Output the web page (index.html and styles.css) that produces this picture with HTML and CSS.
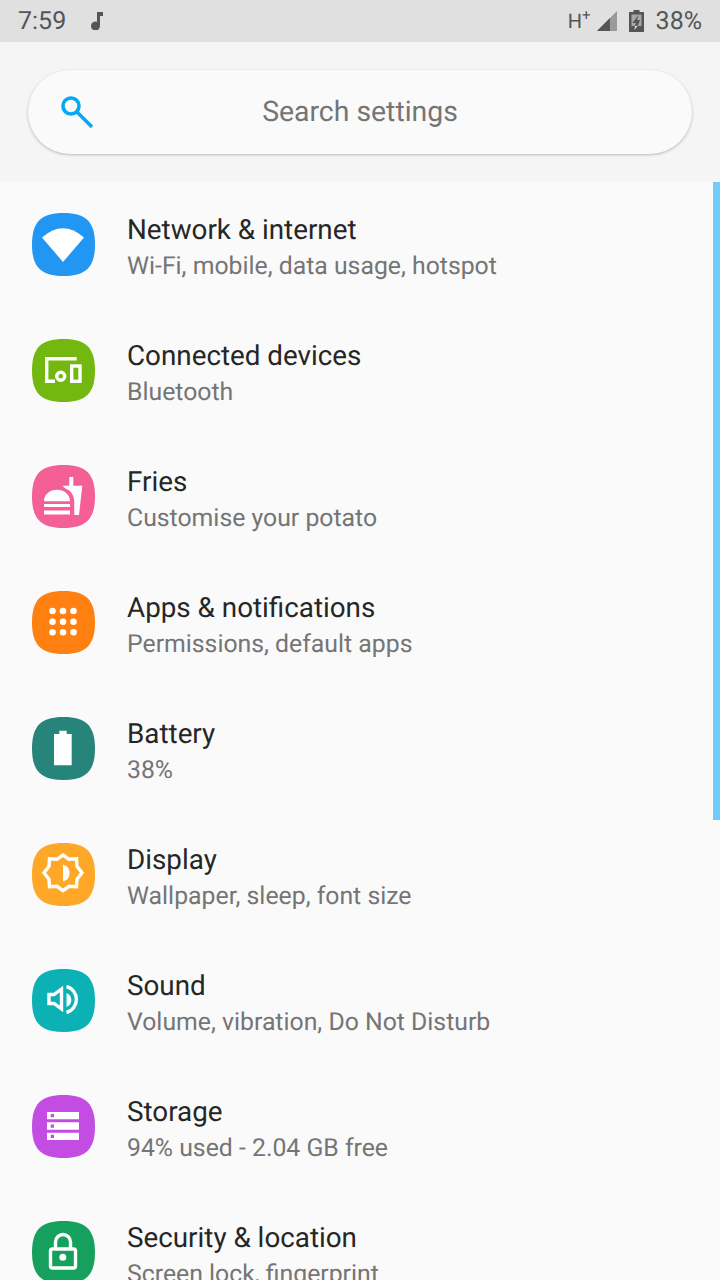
FILE: index.html
```html
<!DOCTYPE html>
<html lang="en">
<head>
    <meta charset="UTF-8">
    <meta name="viewport" content="width=device-width, initial-scale=1.0">
    <title>Settings</title>
    <link rel="stylesheet" href="styles.css">
</head>
<body>
    <div class="phone">
        <div class="status-bar">
            <div class="status-left">
                <span class="clock">7:59</span>
                <svg class="note" width="12" height="18" viewBox="0 0 12 18"><path d="M6 0h6v4H9v10a4.500 4.500 0 1 1-3-4.200z" fill="#555"/></svg>
            </div>
            <div class="status-right">
                <span class="network">H<sup>+</sup></span>
                <svg class="signal" width="20" height="20" viewBox="0 0 20 20"><path d="M20 0v20H0z" fill="#9a9a9a"/><path d="M13 7v13H0z" fill="#555"/></svg>
                <svg class="charging" width="15" height="22" viewBox="0 0 15 22"><path fill="#a6a6a6" d="M2 4h11v12H2z"/><path fill="#555" fill-rule="evenodd" d="M4.500 0h6v2H15v20H0V2h4.500zM2.500 4.500v15h10v-15z"/><path fill="#555" d="M2 16h11v4H2z"/><path fill="#555" d="M9.500 5L3.500 13H7l-1 3h2.500L11 10H8z"/><path fill="#e0e0e0" d="M6 16h2.500L5.500 20z"/></svg>
                <span class="percent">38%</span>
            </div>
        </div>

        <div class="search-area">
            <div class="search-bar">
                <svg class="search-icon" width="34" height="34" viewBox="0 0 34 34"><circle cx="10" cy="10" r="8" fill="none" stroke="#03a9f4" stroke-width="3.600"/><path d="M16 16l15 15" stroke="#03a9f4" stroke-width="3.600"/></svg>
                <span class="search-text">Search settings</span>
            </div>
        </div>

        <div class="list">
            <div class="scroll-thumb"></div>

            <div class="row">
                <svg class="icon" viewBox="0 0 63 63"><path class="tile blue" d="M31.500 0C54 0 63 9 63 31.500S54 63 31.500 63 0 54 0 31.500 9 0 31.500 0z"/><path class="glyph" d="M10 24.500Q31 6 52 24.500L31 49z"/></svg>
                <div class="row-text">
                    <div class="row-title">Network &amp; internet</div>
                    <div class="row-sub">Wi-Fi, mobile, data usage, hotspot</div>
                </div>
            </div>

            <div class="row">
                <svg class="icon" viewBox="0 0 63 63"><path class="tile green" d="M31.500 0C54 0 63 9 63 31.500S54 63 31.500 63 0 54 0 31.500 9 0 31.500 0z"/><path class="line" d="M44.700 19.700H14.700v22.600H23"/><rect class="line" x="39.700" y="27" width="8.300" height="15.300"/><circle class="line" cx="28.700" cy="37.300" r="4"/></svg>
                <div class="row-text">
                    <div class="row-title">Connected devices</div>
                    <div class="row-sub">Bluetooth</div>
                </div>
            </div>

            <div class="row">
                <svg class="icon" viewBox="0 0 63 63"><path class="tile pink" d="M31.500 0C54 0 63 9 63 31.500S54 63 31.500 63 0 54 0 31.500 9 0 31.500 0z"/><path class="glyph" d="M12 36.300c0-7 6-11.600 13-11.600s13 4.600 13 11.600zM12 39h26v3H12zM12 45.500h26V49.500H12zM37.300 12h4v8.700h9L47 50h-4.700V37c0-7-4-12-9-13.500l-3-2.800h7z"/></svg>
                <div class="row-text">
                    <div class="row-title">Fries</div>
                    <div class="row-sub">Customise your potato</div>
                </div>
            </div>

            <div class="row">
                <svg class="icon" viewBox="0 0 63 63"><path class="tile orange" d="M31.500 0C54 0 63 9 63 31.500S54 63 31.500 63 0 54 0 31.500 9 0 31.500 0z"/><g class="glyph"><circle cx="20.500" cy="20" r="3.300"/><circle cx="31" cy="20" r="3.300"/><circle cx="41.500" cy="20" r="3.300"/><circle cx="20.500" cy="30.700" r="3.300"/><circle cx="31" cy="30.700" r="3.300"/><circle cx="41.500" cy="30.700" r="3.300"/><circle cx="20.500" cy="41.300" r="3.300"/><circle cx="31" cy="41.300" r="3.300"/><circle cx="41.500" cy="41.300" r="3.300"/></g></svg>
                <div class="row-text">
                    <div class="row-title">Apps &amp; notifications</div>
                    <div class="row-sub">Permissions, default apps</div>
                </div>
            </div>

            <div class="row">
                <svg class="icon" viewBox="0 0 63 63"><path class="tile teal" d="M31.500 0C54 0 63 9 63 31.500S54 63 31.500 63 0 54 0 31.500 9 0 31.500 0z"/><path class="glyph" d="M27.300 13.700h7.400V17h5v31.300H22V17h5.300z"/></svg>
                <div class="row-text">
                    <div class="row-title">Battery</div>
                    <div class="row-sub">38%</div>
                </div>
            </div>

            <div class="row">
                <svg class="icon" viewBox="0 0 63 63"><path class="tile amber" d="M31.500 0C54 0 63 9 63 31.500S54 63 31.500 63 0 54 0 31.500 9 0 31.500 0z"/><path class="line" d="M31 12l6 4.300 7.500-.5.500 7.500 5 6.500-5 6.500-.5 7.500-7.500-.5-6 4.300-6-4.300-7.500.5-.5-7.500-5-6.500 5-6.500.5-7.500 7.500.5z"/><path class="glyph" d="M31 21.500a8.800 8.800 0 0 1 0 17z"/></svg>
                <div class="row-text">
                    <div class="row-title">Display</div>
                    <div class="row-sub">Wallpaper, sleep, font size</div>
                </div>
            </div>

            <div class="row">
                <svg class="icon" viewBox="0 0 63 63"><path class="tile cyan" d="M31.500 0C54 0 63 9 63 31.500S54 63 31.500 63 0 54 0 31.500 9 0 31.500 0z"/><path class="line" d="M29.500 20v20l-7.500-5.500h-5v-9h5z"/><path class="glyph" d="M34.500 24a7.500 7.500 0 0 1 0 14z"/><path class="line" d="M34.500 17.500a13.500 13.500 0 0 1 0 26"/></svg>
                <div class="row-text">
                    <div class="row-title">Sound</div>
                    <div class="row-sub">Volume, vibration, Do Not Disturb</div>
                </div>
            </div>

            <div class="row">
                <svg class="icon" viewBox="0 0 63 63"><path class="tile purple" d="M31.500 0C54 0 63 9 63 31.500S54 63 31.500 63 0 54 0 31.500 9 0 31.500 0z"/><path class="glyph" fill-rule="evenodd" d="M15 17h32v7.300H15zM18.700 19v3.300H22V19zM15 27.300h32v7.400H15zM18.700 29.400v3.300H22v-3.300zM15 37.700h32V45H15zM18.700 39.700V43H22v-3.300z"/></svg>
                <div class="row-text">
                    <div class="row-title">Storage</div>
                    <div class="row-sub">94% used - 2.04 GB free</div>
                </div>
            </div>

            <div class="row">
                <svg class="icon" viewBox="0 0 63 63"><path class="tile emerald" d="M31.500 0C54 0 63 9 63 31.500S54 63 31.500 63 0 54 0 31.500 9 0 31.500 0z"/><rect class="line" x="18.500" y="28" width="25" height="19" rx="2"/><path class="line" d="M23.500 28v-7a7.500 7.500 0 0 1 15 0v7"/><circle class="glyph" cx="30.800" cy="36.300" r="3.500"/></svg>
                <div class="row-text">
                    <div class="row-title">Security &amp; location</div>
                    <div class="row-sub">Screen lock, fingerprint</div>
                </div>
            </div>
        </div>
    </div>
</body>
</html>
```

FILE: styles.css
```css
html, body {
    margin: 0;
    height: 100%;
    overflow: hidden;
}

body {
    font-family: Roboto, sans-serif;
    background-color: #fafafa;
    text-rendering: geometricPrecision;
}

.phone {
    height: 1280px;
    overflow: hidden;
    display: flex;
    flex-direction: column;
}

.status-bar {
    height: 42px;
    flex: none;
    padding: 0 18px;
    display: flex;
    justify-content: space-between;
    align-items: center;
    background-color: #e0e0e0;
    color: #555;
    font-size: 25px;
}

.status-left,
.status-right {
    display: flex;
    align-items: center;
}

.note {
    margin-left: 25px;
}

.network {
    font-size: 20px;
    margin-right: 6px;
}

.network sup {
    font-size: 15px;
    line-height: 0;
}

.charging {
    margin-left: 12px;
}

.percent {
    margin-left: 12px;
}

.search-area {
    flex: none;
    padding: 28px;
    background-color: #f5f5f5;
}

.search-bar {
    position: relative;
    height: 84px;
    border-radius: 42px;
    background-color: #fafafa;
    box-shadow: 0 1px 3px rgba(0, 0, 0, 0.25);
    display: flex;
    align-items: center;
    justify-content: center;
}

.search-icon {
    position: absolute;
    left: 33px;
    top: 26px;
}

.search-text {
    font-size: 28.400px;
    color: #757575;
    margin-bottom: 2px;
}

.list {
    position: relative;
    flex: none;
}

.scroll-thumb {
    position: absolute;
    top: 0;
    right: 0;
    width: 7px;
    height: 638px;
    background-color: #6fcdfb;
}

.row {
    height: 126px;
    padding-left: 32px;
    display: flex;
    align-items: center;
}

.icon {
    width: 63px;
    height: 63px;
    flex: none;
    margin-right: 32px;
    margin-bottom: 1px;
}

.glyph {
    fill: #fff;
}

.line {
    fill: none;
    stroke: #fff;
    stroke-width: 3.4;
}

.blue { fill: #2196f3; }
.green { fill: #72b80e; }
.pink { fill: #f45f96; }
.orange { fill: #ff7f11; }
.teal { fill: #26847a; }
.amber { fill: #ffa726; }
.cyan { fill: #0cb1b5; }
.purple { fill: #c34de3; }
.emerald { fill: #16a05d; }

.row-text {
    padding-top: 7px;
}

.row-title {
    font-size: 27.800px;
    line-height: 36px;
    margin-bottom: 1px;
    color: #262626;
}

.row-sub {
    font-size: 24.800px;
    line-height: 36px;
    color: #757575;
}
```
